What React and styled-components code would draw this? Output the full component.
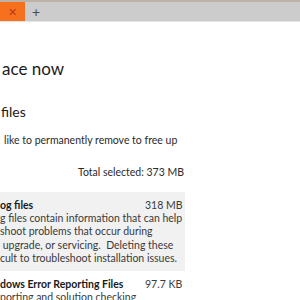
import React from 'react';
import styled, { createGlobalStyle } from 'styled-components';

const GlobalStyle = createGlobalStyle`
  html, body {
    margin: 0;
    padding: 0;
    background: #ffffff;
  }
  body {
    width: 300px;
    height: 300px;
    overflow: hidden;
    font-family: Lato, "Open Sans", sans-serif;
    color: #1f1f1f;
  }
`;

const TabBar = styled.div`
  display: flex;
  height: 19px;
  background: #cccccc;
  border-top: 2px solid #bcb2a8;
  border-bottom: 1px solid #e4e4e4;
`;

const Tab = styled.div`
  width: 25px;
  display: flex;
  align-items: center;
  justify-content: center;
  background: #f7701e;
  color: #b8361a;
  font-size: 11px;
  line-height: 1;
`;

const NewTab = styled.div`
  width: 22px;
  display: flex;
  align-items: center;
  justify-content: center;
  color: #4a4a4a;
  font-size: 14px;
  line-height: 1;
`;

const Content = styled.div`
  width: 185px;
  display: flex;
  flex-direction: column;
  white-space: nowrap;
`;

const Title = styled.h1`
  margin: 35px 0 0 2px;
  font-size: 17px;
  font-weight: 400;
  line-height: 24px;
  color: #1a1a1a;
`;

const Subtitle = styled.h2`
  margin: 22px 0 0 1px;
  font-size: 14px;
  font-weight: 400;
  line-height: 18px;
  color: #1a1a1a;
`;

const Text = styled.p`
  margin: 12px 0 0 4px;
  font-size: 10.5px;
  line-height: 14px;
  color: #2a2a2a;
`;

const Total = styled.div`
  margin-top: 18px;
  padding-right: 1px;
  text-align: right;
  font-size: 10.5px;
  line-height: 14px;
  color: #2a2a2a;
`;

const Item = styled.div`
  margin-top: ${p => p.$gap}px;
  padding: 6px 7px 6px 0;
  background: ${p => (p.$selected ? '#f1f1f1' : 'transparent')};
`;

const ItemHead = styled.div`
  display: flex;
  justify-content: space-between;
  font-size: 10.5px;
  line-height: 14px;
`;

const ItemName = styled.span`
  font-weight: 700;
  color: #1a1a1a;
`;

const ItemSize = styled.span`
  color: #3a3a3a;
  width: 33px;
`;

const ItemDesc = styled.div`
  font-size: 10.5px;
  line-height: 13.3px;
  color: #3a3a3a;
  white-space: pre;
`;

export default function App() {
  return (
    <>
      <GlobalStyle />
      <TabBar>
        <Tab>✕</Tab>
        <NewTab>+</NewTab>
      </TabBar>
      <Content>
        <Title>ace now</Title>
        <Subtitle>files</Subtitle>
        <Text>like to permanently remove to free up</Text>
        <Total>Total selected: 373 MB</Total>
        <Item $selected $gap={13}>
          <ItemHead>
            <ItemName>og files</ItemName>
            <ItemSize>318 MB</ItemSize>
          </ItemHead>
          <ItemDesc>
            {'g files contain information that can help\nshoot problems that occur during\n upgrade, or servicing.  Deleting these\ncult to troubleshoot installation issues.'}
          </ItemDesc>
        </Item>
        <Item $gap={0}>
          <ItemHead>
            <ItemName>dows Error Reporting Files</ItemName>
            <ItemSize>97.7 KB</ItemSize>
          </ItemHead>
          <ItemDesc>{'porting and solution checking'}</ItemDesc>
        </Item>
      </Content>
    </>
  );
}
